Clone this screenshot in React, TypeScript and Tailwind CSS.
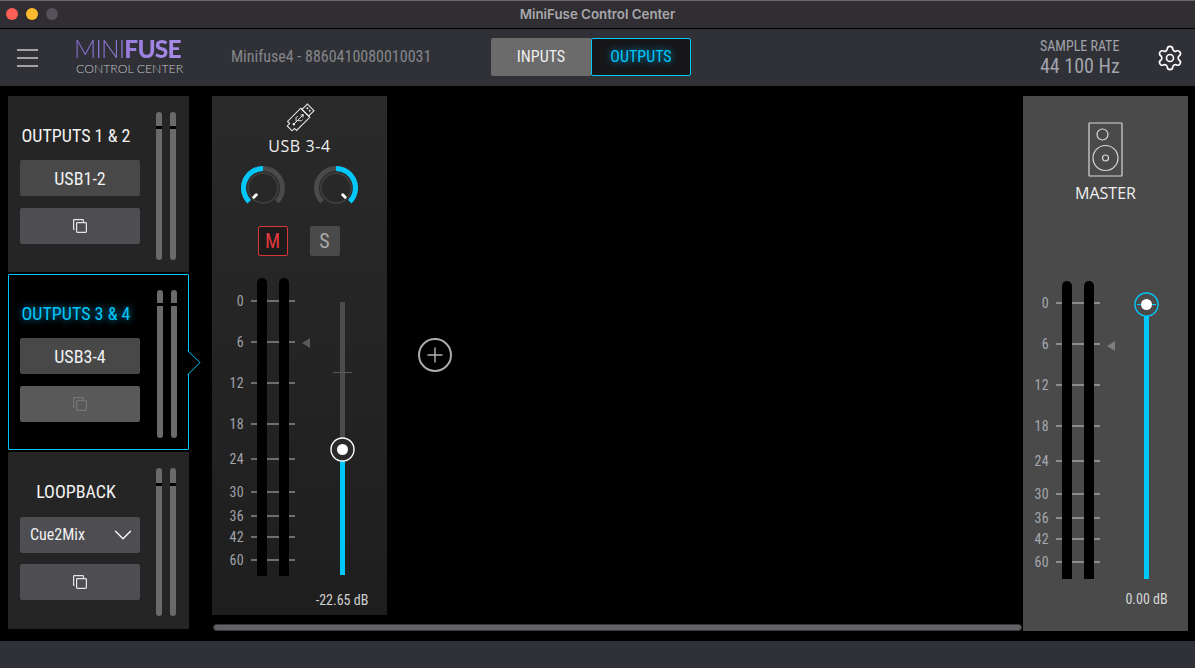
import { Settings, ChevronDown, Plus } from 'lucide-react';

const font = "font-['Roboto',sans-serif] [font-stretch:75%]";

const scaleMarks = [
  { label: '0', y: 23 },
  { label: '6', y: 64 },
  { label: '12', y: 105 },
  { label: '18', y: 146 },
  { label: '24', y: 181 },
  { label: '30', y: 214 },
  { label: '36', y: 238 },
  { label: '42', y: 259 },
  { label: '60', y: 282 },
];

const polar = (r: number, deg: number) => {
  const a = ((deg - 90) * Math.PI) / 180;
  return { x: 23 + r * Math.cos(a), y: 23 + r * Math.sin(a) };
};

const arc = (r: number, from: number, to: number) => {
  const a = polar(r, from);
  const b = polar(r, to);
  return `M${a.x} ${a.y} A${r} ${r} 0 ${to - from > 180 ? 1 : 0} 1 ${b.x} ${b.y}`;
};

const CopyIcon = ({ color }: { color: string }) => (
  <svg width="14" height="14" viewBox="0 0 14 14" fill="none" stroke={color} strokeWidth="1.2">
    <rect x="3.6" y="3.6" width="9.8" height="9.8" rx="0.8" />
    <path d="M1.6 10.4 H1.2 A0.6 0.6 0 0 1 0.6 9.8 V1.2 A0.6 0.6 0 0 1 1.2 0.6 H9.8 A0.6 0.6 0 0 1 10.4 1.2 V3.4" />
  </svg>
);

const LevelBars = ({ notch }: { notch: number }) => (
  <div className="flex gap-2 h-[148px]">
    {[0, 1].map((i) => (
      <div key={i} className="relative w-[6px] h-full rounded-full bg-[#6a6a6a]">
        <div className="absolute left-0 right-0 h-[3px] bg-black" style={{ top: notch }} />
      </div>
    ))}
  </div>
);

interface OutputCardProps {
  title: string;
  source: string;
  notch: number;
  active?: boolean;
  dropdown?: boolean;
  barsTop: number;
}

const OutputCard = ({ title, source, notch, active, dropdown, barsTop }: OutputCardProps) => (
  <div
    className={`relative flex w-[181px] rounded-[1px] ${dropdown ? 'h-[177px]' : 'h-[176px]'} ${
      active ? 'bg-black border border-[#00c8fa]' : 'bg-[#252525]'
    }`}
  >
    <div className={`flex flex-col ${active ? 'pl-[11px] pt-[28px]' : 'pl-[12px] pt-[29px]'} w-[148px]`}>
      <div
        className={`${font} -ml-[4px] h-[22px] w-[120px] whitespace-nowrap text-center text-[18px] font-[380] leading-[22px] ${
          active ? 'text-[#00c8fa] [text-shadow:0_0_7px_#00a8e0]' : 'text-[#f2f2f2]'
        }`}
      >
        {title}
      </div>
      <div
        className={`${font} flex h-[36px] w-[120px] items-center rounded-[2px] text-[#f0f0f0] ${
          dropdown
            ? 'mt-[14px] justify-between px-[10px] bg-[#4e4e52] text-[16px]'
            : 'mt-[13px] justify-center bg-[#484848] text-[18px]'
        }`}
      >
        {source}
        {dropdown && <ChevronDown size={30} strokeWidth={1} className="text-white -mr-[8px]" />}
      </div>
      <div
        className={`flex h-[36px] w-[120px] items-center justify-center rounded-[2px] ${dropdown ? 'mt-[11px]' : 'mt-[12px]'} ${
          active ? 'bg-[#595959]' : 'bg-[#4e4e52]'
        }`}
      >
        <CopyIcon color={active ? '#757575' : '#e4e4e4'} />
      </div>
    </div>
    <div style={{ marginTop: barsTop }}>
      <LevelBars notch={notch} />
    </div>
    {active && (
      <svg className="absolute -right-[13px] top-[75px]" width="14" height="26" viewBox="0 0 14 26" fill="none">
        <path d="M0.5 0.5 L13 12.5 L0.5 25 Z" fill="#000" />
        <path d="M0.5 0.5 L13 12.5 L0.5 25" stroke="#00c8fa" />
      </svg>
    )}
  </div>
);

const Knob = ({ side }: { side: 'left' | 'right' }) => {
  const dot = side === 'left' ? -135 : 135;
  const inner = polar(9.5, dot);
  const outer = polar(13, dot);
  return (
    <svg width="46" height="46" viewBox="0 0 46 46" fill="none">
      <circle cx="23" cy="23" r="15" stroke="#3c3c3c" strokeWidth="2" />
      <path d={arc(19.5, -135, 135)} stroke="#4a4a4a" strokeWidth="5" />
      <path d={side === 'left' ? arc(19.5, -135, 0) : arc(19.5, 0, 135)} stroke="#00c8fa" strokeWidth="5" />
      <path d={`M${inner.x} ${inner.y} L${outer.x} ${outer.y}`} stroke="#fff" strokeWidth="3" strokeLinecap="round" />
    </svg>
  );
};

const FaderHandle = ({ ring, fill, cross }: { ring: string; fill: string; cross?: boolean }) => (
  <svg width="25" height="25" viewBox="0 0 25 25" fill="none">
    <circle cx="12.5" cy="12.5" r="11.5" fill={fill} stroke={ring} strokeWidth="1.4" />
    {cross && <path d="M3 12.5 H22" stroke={ring} />}
    <circle cx="12.5" cy="12.5" r="5.5" fill="#fff" />
  </svg>
);

const UsbIcon = () => (
  <svg width="34" height="34" viewBox="-20 -20 40 40" fill="none" stroke="#eee" strokeWidth="1.2">
    <g transform="translate(-3 3) rotate(45)">
      <rect x="-5.5" y="-22" width="11" height="9" />
      <rect x="-3" y="-19.5" width="2" height="2" fill="#eee" stroke="none" />
      <rect x="1" y="-19.5" width="2" height="2" fill="#eee" stroke="none" />
      <path d="M-7.5 -13 H7.5 V9 L4 9 V13 H-4 V9 H-7.5 Z" />
      <path d="M0 5 V-9 M-2 -7 L0 -10 L2 -7 M0 2 L-3.5 -1 V-4 M0 0 L3.5 -3 V-5" strokeWidth="1" />
      <circle cx="0" cy="6" r="1.5" fill="#eee" stroke="none" />
    </g>
  </svg>
);

const SpeakerIcon = () => (
  <svg width="35" height="55" viewBox="0 0 35 55" fill="none" stroke="#d8d8d8" strokeWidth="1.2">
    <rect x="1" y="1" width="33" height="53" rx="0.5" />
    <circle cx="14.5" cy="12.5" r="5.5" />
    <circle cx="17.5" cy="36" r="12.5" />
    <circle cx="17.5" cy="36" r="3" />
  </svg>
);

interface MeterProps {
  shift?: number;
  tickColor: string;
  labelColor: string;
  arrowClass: string;
}

const Meter = ({ shift = 0, tickColor, labelColor, arrowClass }: MeterProps) => (
  <div className="relative h-[298px] w-[67px]">
    {scaleMarks.map((mark) => (
      <div
        key={mark.label}
        className="absolute left-0 right-0 flex h-[14px] items-center"
        style={{ top: mark.y - 7 + shift }}
      >
        <span className={`${font} w-[16px] text-right text-[14px] leading-[14px] tracking-[0.3px] ${labelColor}`}>
          {mark.label}
        </span>
        <div className={`ml-[7px] h-[2px] flex-1 ${tickColor}`} />
      </div>
    ))}
    <div className="absolute left-[29px] top-0 flex h-full gap-[12px]">
      <div className="h-full w-[10px] rounded-t-full bg-black" />
      <div className="h-full w-[10px] rounded-t-full bg-black" />
    </div>
    <div className={`absolute left-[74px] top-[60px] h-0 w-0 border-y-[5px] border-r-[8px] border-y-transparent ${arrowClass}`} />
  </div>
);

const App = () => {
  return (
    <div className="flex h-[668px] w-[1195px] flex-col overflow-hidden bg-black antialiased">
      {/* title bar */}
      <div className="relative flex h-[29px] shrink-0 items-center justify-center border-t border-b border-b-black border-t-[#6a686c] bg-[#302e33]">
        <div className="absolute left-[6px] top-[7px] flex gap-[8px]">
          <div className="h-[12px] w-[12px] rounded-full bg-[#fe5f57]" />
          <div className="h-[12px] w-[12px] rounded-full bg-[#febb2e]" />
          <div className="h-[12px] w-[12px] rounded-full bg-[#545258]" />
        </div>
        <span className="font-['Inter',sans-serif] text-[13.3px] font-semibold text-[#a8a7ab]">
          MiniFuse Control Center
        </span>
      </div>

      {/* header */}
      <div className="flex h-[57px] shrink-0 items-center bg-[#303136]">
        <div className="ml-[17px] flex w-[21px] flex-col gap-[6px]">
          <div className="h-[2px] bg-[#a3a3a3]" />
          <div className="h-[2px] bg-[#a3a3a3]" />
          <div className="h-[2px] bg-[#a3a3a3]" />
        </div>
        <div className="ml-[38px] -mt-[2px] flex w-[110px] flex-col">
          <div className="-ml-[2px] w-[107px] whitespace-nowrap bg-gradient-to-r from-[#8a6fd8] to-[#a98be8] bg-clip-text font-['Lato',sans-serif] text-[24.5px] leading-[24px] tracking-[-0.8px] text-transparent">
            <span className="font-light">MINI</span>
            <span className="font-black">FUSE</span>
          </div>
          <div className="mt-[1px] whitespace-nowrap font-['Lato',sans-serif] text-[12.3px] font-light leading-[14px] text-[#c4c4c8]">
            CONTROL CENTER
          </div>
        </div>
        <div className={`${font} ml-[45px] -mt-[2px] w-[260px] whitespace-nowrap text-[16px] text-[#85868a]`}>
          Minifuse4 - 8860410080010031
        </div>
        <div className="-mt-[1px] flex h-[38px]">
          <div className={`${font} flex w-[100px] items-center justify-center rounded-l-[2px] bg-[#6b6b6b] text-[16px] text-[#eeeeee]`}>
            INPUTS
          </div>
          <div className={`${font} flex w-[100px] items-center justify-center rounded-[2px] border border-[#00c8fa] bg-[#161618] text-[16px] text-[#00c8fa] [text-shadow:0_0_7px_#00a8e0]`}>
            OUTPUTS
          </div>
        </div>
        <div className={`${font} ml-[349px] flex w-[80px] flex-col whitespace-nowrap text-[#a0a3ab]`}>
          <span className="text-[14px] leading-[16px]">SAMPLE RATE</span>
          <span className="text-[20px] leading-[24px]">44 100 Hz</span>
        </div>
        <Settings size={28} strokeWidth={1.4} className="ml-[36px] text-white" />
      </div>

      {/* main area */}
      <div className="flex flex-1 pt-[10px]">
        {/* outputs */}
        <div className="ml-[8px] flex w-[181px] flex-col gap-[2px]">
          <OutputCard title="OUTPUTS 1 & 2" source="USB1-2" notch={14} barsTop={16} />
          <OutputCard title="OUTPUTS 3 & 4" source="USB3-4" notch={13} barsTop={15} active />
          <OutputCard title="LOOPBACK" source="Cue2Mix" notch={15} barsTop={16} dropdown />
        </div>

        {/* mixer */}
        <div className="ml-[23px] flex w-[811px] flex-col">
          <div className="flex h-[519px] items-start">
            <div className="flex h-full w-[175px] flex-col items-center bg-gradient-to-b from-[#2a2a2a] to-[#1e1e1e] pt-[5px]">
              <UsbIcon />
              <div className="mt-[2px] font-['Open_Sans',sans-serif] text-[16px] leading-[18px] tracking-[0.6px] text-[#eeeeee]">
                USB 3-4
              </div>
              <div className="mt-[10px] flex gap-[27px]">
                <Knob side="left" />
                <Knob side="right" />
              </div>
              <div className="-ml-[2px] mt-[15px] flex gap-[22px]">
                <div className={`${font} flex h-[30px] w-[30px] items-center justify-center rounded-[2px] border border-[#d8363c] bg-[#1c1c1c] text-[20px] text-[#e0383e]`}>
                  M
                </div>
                <div className={`${font} flex h-[30px] w-[30px] items-center justify-center rounded-[2px] bg-[#4a4a4a] text-[20px] text-[#a8a8a8]`}>
                  S
                </div>
              </div>
              <div className="mt-[22px] flex w-full pl-[16px]">
                <Meter tickColor="bg-[#6e6e6e]" labelColor="text-[#a0a2aa]" arrowClass="border-r-[#5a5a5a]" />
                <div className="relative ml-[45px] mt-[24px] flex h-[273px] w-[5px] flex-col">
                  <div className="flex-1 bg-[#4c4c4c]" />
                  <div className="h-[126px] bg-[#00c8fa]" />
                  <div className="absolute -left-[7px] top-[70px] h-[1px] w-[19px] bg-[#5a5a5a]" />
                  <div className="absolute -left-[10px] top-[135px]">
                    <FaderHandle ring="#fff" fill="#2a2a2a" />
                  </div>
                </div>
              </div>
              <div className={`${font} ml-[85px] mt-[14px] whitespace-nowrap text-[14px] text-[#d0d0d0]`}>
                -22.65 dB
              </div>
            </div>
            <button className="ml-[31px] mt-[242px] flex h-[34px] w-[34px] items-center justify-center rounded-full border-2 border-[#ababab] text-[#b5b5b5]">
              <Plus size={24} strokeWidth={1.4} />
            </button>
          </div>
          <div className="ml-[1px] mt-[9px] h-[7px] w-[809px] rounded-full border border-[#38383a] bg-[#626266]" />
        </div>

        {/* master */}
        <div className="flex h-[535px] w-[165px] flex-col items-center bg-[#4a4a4a] pt-[26px]">
          <SpeakerIcon />
          <div className="mt-[6px] font-['Open_Sans',sans-serif] text-[16px] leading-[20px] text-[#f0f0f0]">
            MASTER
          </div>
          <div className="mt-[78px] flex w-full pl-[10px]">
            <Meter shift={-1} tickColor="bg-[#8c8c8c]" labelColor="text-[#a5a8b0]" arrowClass="border-r-[#7e7e7e]" />
            <div className="relative ml-[44px] mt-[23px] h-[275px] w-[5px] bg-[#00c8fa]">
              <div className="absolute -left-[10px] -top-[12px]">
                <FaderHandle ring="#00c8fa" fill="#4a4a4a" cross />
              </div>
            </div>
          </div>
          <div className={`${font} ml-[82px] mt-[10px] whitespace-nowrap text-[14px] text-[#d8d8d8]`}>
            0.00 dB
          </div>
        </div>
      </div>

      {/* footer */}
      <div className="mt-[10px] h-[27px] shrink-0 bg-[#303136]" />
    </div>
  );
};

export default App;
